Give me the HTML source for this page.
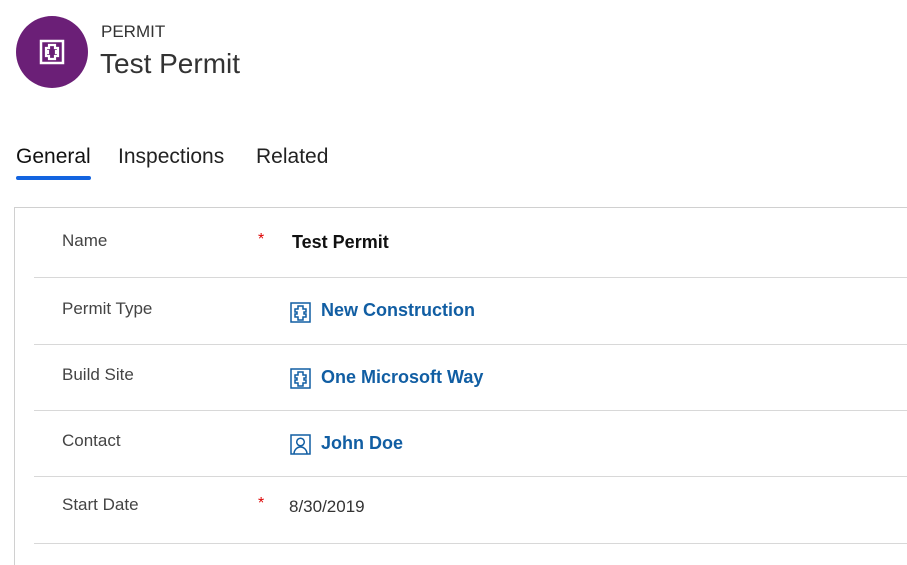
<!DOCTYPE html>
<html style="height:565px;overflow:hidden"><head><style>
body{margin:0;width:907px;height:565px;background:#fff;font-family:"Liberation Sans",sans-serif;position:relative;overflow:hidden;color:#333}
.a{position:absolute}
.lbl{position:absolute;left:62px;font-size:17px;color:#444}
.sep{position:absolute;left:34px;right:0;height:1px;background:#d8d8d8}
.lnk{position:absolute;left:321px;font-size:18px;font-weight:bold;color:#115ea3}
.star{position:absolute;left:258px;color:#d00;font-size:16px}
.ic{position:absolute;left:290px}
</style></head><body>
<div class="a" style="left:16px;top:16px;width:72px;height:72px;border-radius:50%;background:#6b1f77"></div>
<svg class="a" style="left:39px;top:39px" width="26" height="26" viewBox="0 0 26 26"><rect x="2" y="2" width="22" height="22" fill="none" stroke="#fff" stroke-width="2.5"/><path d="M10 6h6v3h3v3h-2v2h2v3h-3v3h-6v-3H7v-3h2v-2H7V9h3z" fill="none" stroke="#fff" stroke-width="2.2"/></svg>
<div class="a" style="left:101px;top:22px;font-size:17px;color:#333">PERMIT</div>
<div class="a" style="left:100px;top:48px;font-size:28px;color:#333">Test Permit</div>
<div class="a" style="left:16px;top:145px;font-size:21px;color:#111">General</div>
<div class="a" style="left:16px;top:176px;width:75px;height:4px;border-radius:2px;background:#1364e0"></div>
<div class="a" style="left:118px;top:145px;font-size:21px;color:#222">Inspections</div>
<div class="a" style="left:256px;top:145px;font-size:21px;color:#222">Related</div>
<div class="a" style="left:14px;top:207px;width:893px;height:358px;border-top:1px solid #d0d0d0;border-left:1px solid #d0d0d0"></div>
<div class="lbl" style="top:231px">Name</div><div class="star" style="top:231px">*</div>
<div class="a" style="left:292px;top:232px;font-size:18px;font-weight:bold;color:#111">Test Permit</div>
<div class="sep" style="top:277px"></div>
<div class="lbl" style="top:299px">Permit Type</div>
<svg class="ic" style="top:302px" width="21" height="21" viewBox="0 0 21 21"><rect x="1" y="1" width="19" height="19" fill="none" stroke="#115ea3" stroke-width="1.5"/><path d="M8 4h5v3h3v3h-2v2h2v3h-3v3H8v-3H5v-3h2v-2H5V7h3z" fill="none" stroke="#115ea3" stroke-width="1.5"/></svg>
<div class="lnk" style="top:300px">New Construction</div>
<div class="sep" style="top:344px"></div>
<div class="lbl" style="top:365px">Build Site</div>
<svg class="ic" style="top:368px" width="21" height="21" viewBox="0 0 21 21"><rect x="1" y="1" width="19" height="19" fill="none" stroke="#115ea3" stroke-width="1.5"/><path d="M8 4h5v3h3v3h-2v2h2v3h-3v3H8v-3H5v-3h2v-2H5V7h3z" fill="none" stroke="#115ea3" stroke-width="1.5"/></svg>
<div class="lnk" style="top:367px">One Microsoft Way</div>
<div class="sep" style="top:410px"></div>
<div class="lbl" style="top:431px">Contact</div>
<svg class="ic" style="top:434px" width="21" height="21" viewBox="0 0 21 21"><rect x="1" y="1" width="19" height="19" fill="none" stroke="#115ea3" stroke-width="1.5"/><circle cx="10.5" cy="8" r="3.8" fill="none" stroke="#115ea3" stroke-width="1.5"/><path d="M4 20c0-4 3-7 6.5-7s6.5 3 6.5 7" fill="none" stroke="#115ea3" stroke-width="1.5"/></svg>
<div class="lnk" style="top:433px">John Doe</div>
<div class="sep" style="top:476px"></div>
<div class="lbl" style="top:495px">Start Date</div><div class="star" style="top:495px">*</div>
<div class="a" style="left:289px;top:497px;font-size:17px;color:#333">8/30/2019</div>
<div class="sep" style="top:543px"></div>
</body></html>
